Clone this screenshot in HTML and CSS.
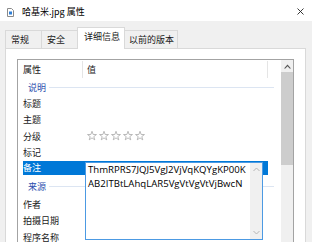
FILE: index.html
```html
<!DOCTYPE html>
<html lang="zh-CN">
<head>
    <meta charset="UTF-8">
    <title>哈基米.jpg 属性</title>
    <link rel="stylesheet" href="styles.css">
</head>
<body>
    <div class="titlebar">
        <svg class="fileIcon" width="7" height="9" viewBox="0 0 7 9">
            <path d="M0.5 0.5 H4.5 L6.5 2.5 V8.5 H0.5 Z" fill="#fff" stroke="#8a8a8a"/>
            <rect x="2" y="3.5" width="3" height="3" fill="#2f7fd6"/>
        </svg>
        <span class="titleText">哈基米.jpg 属性</span>
        <svg class="closeBtn" width="7" height="7" viewBox="0 0 7 7">
            <path d="M0.5 0.5 L6.5 6.5 M6.5 0.5 L0.5 6.5" stroke="#222" stroke-width="0.9"/>
        </svg>
    </div>

    <div class="tabs">
        <div class="tab t1">常规</div>
        <div class="tab t2">安全</div>
        <div class="tab active">详细信息</div>
        <div class="tab t4">以前的版本</div>
    </div>

    <div class="panel">
        <div class="listview">
            <div class="list">
                <div class="header">
                    <div class="hk">属性</div>
                    <div class="hv">值</div>
                </div>
                <div class="group first"><span>说明</span><i></i></div>
                <div class="row"><div class="k">标题</div></div>
                <div class="row"><div class="k">主题</div></div>
                <div class="row">
                    <div class="k">分级</div>
                    <div class="stars">
                        <svg viewBox="0 0 10 10"><polygon points="5,0.3 6.12,3.46 9.47,3.55 6.81,5.59 7.76,8.8 5,6.9 2.24,8.8 3.19,5.59 0.53,3.55 3.88,3.46"/></svg>
                        <svg viewBox="0 0 10 10"><polygon points="5,0.3 6.12,3.46 9.47,3.55 6.81,5.59 7.76,8.8 5,6.9 2.24,8.8 3.19,5.59 0.53,3.55 3.88,3.46"/></svg>
                        <svg viewBox="0 0 10 10"><polygon points="5,0.3 6.12,3.46 9.47,3.55 6.81,5.59 7.76,8.8 5,6.9 2.24,8.8 3.19,5.59 0.53,3.55 3.88,3.46"/></svg>
                        <svg viewBox="0 0 10 10"><polygon points="5,0.3 6.12,3.46 9.47,3.55 6.81,5.59 7.76,8.8 5,6.9 2.24,8.8 3.19,5.59 0.53,3.55 3.88,3.46"/></svg>
                        <svg viewBox="0 0 10 10"><polygon points="5,0.3 6.12,3.46 9.47,3.55 6.81,5.59 7.76,8.8 5,6.9 2.24,8.8 3.19,5.59 0.53,3.55 3.88,3.46"/></svg>
                    </div>
                </div>
                <div class="row"><div class="k">标记</div></div>
                <div class="row sel"><div class="k">备注</div></div>
                <div class="group second"><span>来源</span><i></i></div>
                <div class="row"><div class="k">作者</div></div>
                <div class="row"><div class="k">拍摄日期</div></div>
                <div class="row"><div class="k">程序名称</div></div>

                <!-- edit box over the selected row -->
                <div class="editBox">
                    <div class="editText">ThmRPRS7JQJ5VgJ2VjVqKQYgKP00K<br>AB2ITBtLAhqLAR5VgVtVgVtVjBwcN</div>
                    <div class="editScroll">
                        <svg width="7" height="5" viewBox="0 0 7 5"><path d="M0.5 4 L3.5 1 L6.5 4" fill="none" stroke="#b5b5b5"/></svg>
                        <svg width="7" height="5" viewBox="0 0 7 5"><path d="M0.5 1 L3.5 4 L6.5 1" fill="none" stroke="#b5b5b5"/></svg>
                    </div>
                </div>
            </div>
            <div class="vscroll">
                <div class="upBtn">
                    <svg width="7" height="5" viewBox="0 0 7 5"><path d="M0 4.5 L3.5 0.5 L7 4.5 L5.6 4.5 L3.5 2.2 L1.4 4.5 Z" fill="#555"/></svg>
                </div>
                <div class="thumb"></div>
            </div>
        </div>
    </div>
</body>
</html>
```

FILE: styles.css
```css
*{margin: 0; padding: 0; box-sizing: border-box;}
body{width: 312px; height: 242px; overflow: hidden; background-color: #f0f0f0; font-family: "Noto Sans CJK SC", "Noto Sans", sans-serif; font-size: 9px; color: #1a1a1a;}

.titlebar{height: 21px; background-color: #fff; display: flex; align-items: center; padding: 2px 0 0 7px;}
.fileIcon{margin: 2px 8px 0 0;}
.titleText{flex: 1; color: #000;}
.closeBtn{margin: 0 8px 1px 0;}

.tabs{height: 27px; display: flex; align-items: flex-end; padding-left: 5px;}
.tab{height: 18px; border: 1px solid #d9d9d9; border-bottom: none; background-color: #f0f0f0; padding: 3px 0 0 5px; line-height: 12px; margin-right: -1px;}
.t1{width: 37px;}
.t2{width: 37px;}
.t4{width: 54px; padding-left: 4px;}
.tab.active{height: 22px; width: 48px; background-color: #fff; margin-bottom: -1px; position: relative; z-index: 1; padding: 3px 0 0 6px;}

.panel{margin-left: 5px; width: 301px; height: 300px; background-color: #fff; border: 1px solid #d9d9d9; padding: 10px 11px 0 11px;}

.listview{width: 277px; height: 260px; border: 1px solid #a3a3a3; display: flex;}
.list{flex: 1; position: relative;}

.header{height: 20px; display: flex; align-items: stretch;}
.header>div{display: flex; align-items: center; border-right: 1px solid #e5e5e5; margin: 1px 0 2px;}
.hk{width: 65px; padding-left: 5px;}
.hv{width: 185px; padding-left: 4px;}

.group{display: flex; align-items: center; padding-left: 10px; color: #2b4fae;}
.group.first{height: 15px;}
.group.second{height: 18.5px;}
.group span{margin-right: 3px;}
.group i{display: block; width: 225px; height: 1px; background-color: #dce5f2;}

.row{height: 16.5px; display: flex; align-items: center; padding-left: 5px;}
.row .k{width: 59px;}
.row.sel{margin-left: 3px; width: 247px; padding: 0 0 3px 2px; background-color: #0078d7; background-clip: content-box; color: #fff;}

.stars{display: flex; gap: 2px; margin-left: 5px;}
.stars svg{width: 10px; height: 10px; fill: none; stroke: #a9a9a9; stroke-width: 0.8;}

.editBox{position: absolute; left: 67px; top: 102px; width: 178px; height: 78px; background-color: #fff; border: 1px solid #4c9ae3; display: flex;}
.editText{flex: 1; padding-left: 2px; line-height: 14px; white-space: nowrap; color: #000; font-family: "Open Sans", "Noto Sans", sans-serif; font-size: 9.6px;}
.editScroll{width: 12px; background-color: #f0f0f0; display: flex; flex-direction: column; justify-content: space-between; align-items: center; padding: 4px 0 4px;}

.vscroll{width: 12px; background-color: #f0f0f0; margin-right: 0;}
.upBtn{height: 12px; display: flex; align-items: center; justify-content: center;}
.thumb{height: 93px; background-color: #cdcdcd;}
```
